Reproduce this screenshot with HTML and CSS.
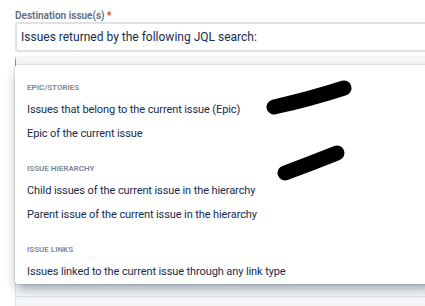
FILE: index.html
```html
<!DOCTYPE html>
<html lang="en">

<head>
  <meta charset="UTF-8">
  <meta name="viewport" content="width=device-width, initial-scale=1.0">
  <title>Destination issue(s)</title>
  <link rel="stylesheet" href="styles.css">
</head>

<body>

  <div id="form">
    <label class="field-label">Destination issue(s) <span class="required">*</span></label>

    <div class="select">
      <span class="select-value">Issues returned by the following JQL search:</span>
    </div>

    <div class="jql">
      <span class="caret"></span>
    </div>
    <div class="next-field"></div>

    <!-- ! dropdown menu, open over the JQL field -->
    <div class="menu">
      <div class="group">
        <div class="group-heading">EPIC/STORIES</div>
        <div class="option">Issues that belong to the current issue (Epic)</div>
        <div class="option">Epic of the current issue</div>
      </div>
      <div class="group">
        <div class="group-heading">ISSUE HIERARCHY</div>
        <div class="option">Child issues of the current issue in the hierarchy</div>
        <div class="option">Parent issue of the current issue in the hierarchy</div>
      </div>
      <div class="group">
        <div class="group-heading">ISSUE LINKS</div>
        <div class="option">Issues linked to the current issue through any link type</div>
      </div>
    </div>
  </div>

  <!-- ! redaction marks drawn over the screenshot -->
  <svg class="redact" width="425" height="306" viewBox="0 0 425 306">
    <path d="M274 107 Q310 99 344 88" />
    <path d="M285 173 Q312 163 337 153" />
  </svg>

</body>

</html>
```

FILE: styles.css
```css
:root {
  --text-colour: #172b4d;
  --subtle-colour: #7a869a;
  --label-colour: #5e6c84;
  --border-colour: #dfe1e6;
  --field-colour: #f4f5f7;
  --font-family: Roboto, "Liberation Sans", sans-serif;
}

html,
body {
  margin: 0px;
  padding: 0px;
  height: 100%;
  overflow: hidden;
  background-color: #ffffff;
  font-family: var(--font-family);
  color: var(--text-colour);
}

#form {
  position: relative;
  padding: 10px 0 0 15px;
}

.field-label {
  display: block;
  height: 12px;
  line-height: 12px;
  font-size: 10px;
  font-weight: 600;
  color: var(--label-colour);
}

.required {
  color: #de350b;
}

.select {
  height: 26px;
  display: flex;
  align-items: center;
  padding-left: 4px;
  border: 2px solid var(--border-colour);
  border-right: none;
  border-radius: 3px 0 0 3px;
  background-color: #ffffff;
  font-size: 12px;
}

.jql {
  margin-top: 4px;
  height: 241px;
  box-sizing: border-box;
  padding-top: 3px;
  background-color: var(--field-colour);
  border-left: 1px solid var(--border-colour);
  border-bottom: 1px solid var(--border-colour);
}

.caret {
  display: block;
  width: 1px;
  height: 7px;
  margin-left: -1px;
  background-color: #4c9aff;
}

.next-field {
  height: 20px;
  background-color: var(--field-colour);
  border-left: 1px solid var(--border-colour);
}

.menu {
  position: absolute;
  top: 65px;
  left: 15px;
  right: -10px;
  background-color: #ffffff;
  border-radius: 3px;
  box-shadow: 0 6px 12px -2px rgba(9, 30, 66, 0.4), 0 0 2px rgba(9, 30, 66, 0.3);
}

.group {
  padding-top: 16px;
}

.group-heading {
  height: 14px;
  line-height: 14px;
  margin-bottom: 3px;
  padding-left: 12px;
  font-size: 8px;
  font-weight: 600;
  color: var(--subtle-colour);
}

.option {
  height: 24px;
  line-height: 24px;
  padding-left: 12px;
  font-size: 11px;
  letter-spacing: -0.1px;
  white-space: nowrap;
}

.redact {
  position: absolute;
  top: 0;
  left: 0;
  pointer-events: none;
}

.redact path {
  fill: none;
  stroke: #000000;
  stroke-width: 15;
  stroke-linecap: round;
}
```
